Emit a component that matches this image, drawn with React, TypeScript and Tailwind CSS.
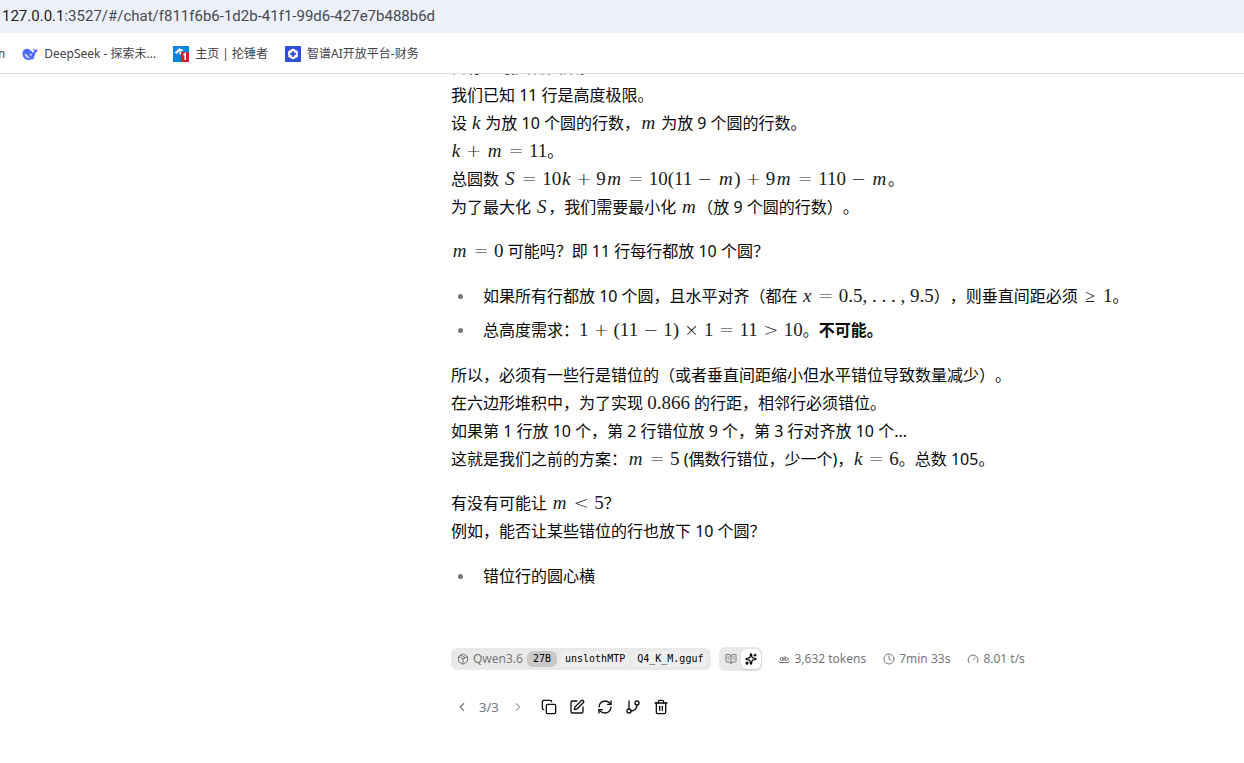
import {
  BookOpenText,
  ChevronLeft,
  ChevronRight,
  Clock,
  Copy,
  Gauge,
  GitBranch,
  Package,
  RefreshCw,
  Sparkles,
  SquarePen,
  Trash2,
  WholeWord,
} from 'lucide-react'
import type { ReactNode } from 'react'

const bookmarks = [
  { title: 'DeepSeek - 探索未...', icon: DeepSeekIcon },
  { title: '主页 | 抡锤者', icon: HammerIcon },
  { title: '智谱AI开放平台-财务', icon: ZhipuIcon },
]

const stats = [
  { icon: WholeWord, label: '3,632 tokens' },
  { icon: Clock, label: '7min 33s' },
  { icon: Gauge, label: '8.01 t/s' },
]

const actions = [
  { icon: Copy, label: 'Copy' },
  { icon: SquarePen, label: 'Edit' },
  { icon: RefreshCw, label: 'Regenerate' },
  { icon: GitBranch, label: 'Fork' },
  { icon: Trash2, label: 'Delete' },
]

function DeepSeekIcon() {
  return (
    <svg viewBox="0 0 16 16" className="size-4">
      <path
        d="M15.6 3.2c-.8 0-1.2.5-1.8.6-.8.1-1.500-.3-2-.9-.3-.4-.4-.8-.4-.8s-.5 1.300.2 2.400c.3.5.8.8.8.8s-.5 1.500-1.400 1.200C9.500 6 8.700 3.200 5.700 2.900 2.500 2.500.4 4.900.5 8c.1 3.200 2.500 6 6 6 1.500 0 2.700-.4 3.600-1.100.7.4 1.800.5 2.100.1.2-.3-.5-.6-1-1.100 1.500-1.500 2-3.200 2.100-5.200 1.300-.3 2.400-1.400 2.300-3.500z"
        fill="#4d6bfe"
      />
      <path d="M2.500 7.500c1.500 0 2.800 1.100 3.700 2.500.7 1 1.300 1.600 2 2-2.900.8-5.600-1.200-5.700-4.500z" fill="#c3ceff" />
      <path d="M7.600 7.500c1 0 2.200.8 2.300 2.200-.8.100-2.100-.7-2.300-2.200z" fill="#fff" />
    </svg>
  )
}

function HammerIcon() {
  return (
    <svg viewBox="0 0 16 16" className="size-4">
      <rect width="16" height="16" fill="#0f82e0" />
      <path d="M1.800 6.500 6.500 2l1.200 1.200 1.500-.3 1.300 2-1.600-.2-1.200 1-1-.8-3.200 3z" fill="#fff" />
      <path d="m6.500 6 3 4" stroke="#fff" strokeWidth="1.500" />
      <rect x="8" y="6" width="8" height="10" rx="1.500" fill="#d3202a" />
      <path d="m10.500 9 1.700-1.300V14" fill="none" stroke="#fff" strokeWidth="1.600" />
    </svg>
  )
}

function ZhipuIcon() {
  return (
    <svg viewBox="0 0 16 16" className="size-4">
      <rect width="16" height="16" rx="1" fill="#2f4fd8" />
      <path d="m8 2.500 4.800 2.700v5.600L8 13.500l-4.800-2.700V5.200z" fill="#fff" />
      <path d="m8 5 1 2 2 1-2 1-1 2-1-2-2-1 2-1z" fill="#2f4fd8" stroke="#2f4fd8" />
    </svg>
  )
}

const variableWidths: Record<string, string> = {
  m: 'w-[17px]',
  k: 'w-[10px]',
  S: 'w-[13px]',
  x: 'w-[11px]',
}

// Inline formula: variables are italic, operators get their own spacing.
function Tex({ children }: { children: string }) {
  const tokens = children.match(/[mkSx]|[-+×=<>≥]|[^mkSx\-+×=<>≥]+/g) ?? []

  return (
    <span className="font-['Liberation_Serif',serif] text-[19px] leading-none text-[#1a1a1a]">
      {tokens.map((token, index) => {
        if (variableWidths[token]) {
          return (
            <i key={index} className={`inline-block text-center ${variableWidths[token]}`}>
              {token}
            </i>
          )
        }
        if (/[-+×]/.test(token)) {
          return (
            <span
              key={index}
              className="mx-[5px] inline-block w-[15px] text-center font-['DejaVu_Sans'] text-lg leading-none font-extralight"
            >
              {token === '-' ? '−' : token}
            </span>
          )
        }
        if (/[=<>≥]/.test(token)) {
          return (
            <span
              key={index}
              className={`inline-block w-4 text-center font-['DejaVu_Sans'] text-lg leading-none font-extralight ${index === 0 ? 'mr-[5px]' : 'mx-[5px]'}`}
            >
              {token}
            </span>
          )
        }
        return <span key={index}>{token}</span>
      })}
    </span>
  )
}

function Item({ children }: { children: ReactNode }) {
  return (
    <li className="flex items-center">
      <span className="mr-5 ml-[7px] size-[5px] rounded-full bg-[#777]" />
      <div>{children}</div>
    </li>
  )
}

function BrowserBar() {
  return (
    <header className="relative z-10 border-b border-[#dcdde0] bg-white">
      <div className="h-[33px] bg-[#ebf0f9] pl-[2px] font-[Roboto] text-[15px] leading-8 text-[#474a4f]">
        <span className="text-[#1f2023]">127.0.0.1</span>:3527/#/chat/f811f6b6-1d2b-41f1-99d6-427e7b488b6d
      </div>
      <nav className="flex h-10 items-center gap-[17px] pt-0.5 text-xs text-[#3f4247]">
        <a href="#" className="-ml-1.5">m</a>
        {bookmarks.map(({ title, icon: Icon }) => (
          <a key={title} href="#" className="flex items-center gap-1.5">
            <Icon />
            {title}
          </a>
        ))}
      </nav>
    </header>
  )
}

function Message() {
  return (
    <article className="space-y-4 text-base leading-7 text-[#0a0a0a] [text-spacing-trim:space-all]">
      <p>
        目标：最大化圆数。
        <br />
        我们已知 11 行是高度极限。
        <br />
        设 <Tex>k</Tex> 为放 10 个圆的行数，<Tex>m</Tex> 为放 9 个圆的行数。
        <br />
        <Tex>k+m=11</Tex>。
        <br />
        总圆数 <Tex>S=10k+9m=10(11-m)+9m=110-m</Tex>。
        <br />
        为了最大化 <Tex>S</Tex>，我们需要最小化 <Tex>m</Tex>（放 9 个圆的行数）。
      </p>
      <p>
        <Tex>m=0</Tex> 可能吗？即 11 行每行都放 10 个圆？
      </p>
      <ul className="space-y-1.5 py-px">
        <Item>
          如果所有行都放 10 个圆，且水平对齐（都在 <Tex>x=0.5, . . . , 9.5</Tex>），则垂直间距必须 <Tex>≥1</Tex>。
        </Item>
        <Item>
          总高度需求：<Tex>1+(11-1)×1=11&gt;10</Tex>。<strong>不可能。</strong>
        </Item>
      </ul>
      <p>
        所以，必须有一些行是错位的（或者垂直间距缩小但水平错位导致数量减少）。
        <br />
        在六边形堆积中，为了实现 <Tex>0.866</Tex> 的行距，相邻行必须错位。
        <br />
        如果第 1 行放 10 个，第 2 行错位放 9 个，第 3 行对齐放 10 个...
        <br />
        这就是我们之前的方案：<Tex>m=5</Tex> (偶数行错位，少一个)，<Tex>k=6</Tex>。总数 105。
      </p>
      <p>
        有没有可能让 <Tex>{'m<5'}</Tex>？
        <br />
        例如，能否让某些错位的行也放下 10 个圆？
      </p>
      <ul className="py-px">
        <Item>错位行的圆心横</Item>
      </ul>
    </article>
  )
}

function MessageInfo() {
  return (
    <div className="flex items-center text-xs text-[#777]">
      <button className="flex h-[22px] items-center rounded-md bg-[#e9e9e9] pr-1 pl-1.5">
        <Package className="mr-1 size-3" />
        Qwen3.6
        <span className="ml-1 flex font-['DejaVu_Sans_Mono',monospace] text-[10px] leading-4 text-black">
          <span className="rounded-md bg-[#c9c9c9] px-1.5">27B</span>
          <span className="ml-1 rounded-md bg-[#eee] px-1">unslothMTP</span>
          <span className="ml-1 rounded-md bg-[#eee] px-1">Q4_K_M.gguf</span>
        </span>
      </button>
      <div className="ml-2 flex h-6 items-center rounded-md bg-[#e9e9e9] p-px">
        <button aria-label="Reading" className="flex h-5 w-[21px] items-center justify-center">
          <BookOpenText className="size-3" />
        </button>
        <button
          aria-label="Generation"
          className="flex h-5 w-5 items-center justify-center rounded-md bg-white text-black shadow-sm"
        >
          <Sparkles className="size-3" strokeWidth={2.5} />
        </button>
      </div>
      <div className="ml-4 flex gap-[17px]">
        {stats.map(({ icon: Icon, label }) => (
          <span key={label} className="flex items-center gap-1">
            <Icon className="size-3" />
            {label}
          </span>
        ))}
      </div>
    </div>
  )
}

function MessageActions() {
  return (
    <div className="flex items-center text-[#111]">
      <div className="flex items-center text-[13px] leading-4 text-[#777]">
        <button aria-label="Previous version" className="px-1">
          <ChevronLeft className="size-3.5" />
        </button>
        <span className="pr-2 pl-1.5">3/3</span>
        <button aria-label="Next version" disabled className="px-1 text-[#aaa]">
          <ChevronRight className="size-3.5" />
        </button>
      </div>
      <div className="ml-3 flex gap-3">
        {actions.map(({ icon: Icon, label }) => (
          <button key={label} aria-label={label}>
            <Icon className="size-4" />
          </button>
        ))}
      </div>
    </div>
  )
}

export default function App() {
  return (
    <div className="min-h-screen overflow-hidden bg-white font-['Noto_Sans','Noto_Sans_CJK_SC',sans-serif]">
      <BrowserBar />
      <main className="-mt-[21px] ml-[451px] pb-12">
        <Message />
        <div className="mt-14">
          <MessageInfo />
        </div>
        <div className="mt-7">
          <MessageActions />
        </div>
      </main>
    </div>
  )
}
